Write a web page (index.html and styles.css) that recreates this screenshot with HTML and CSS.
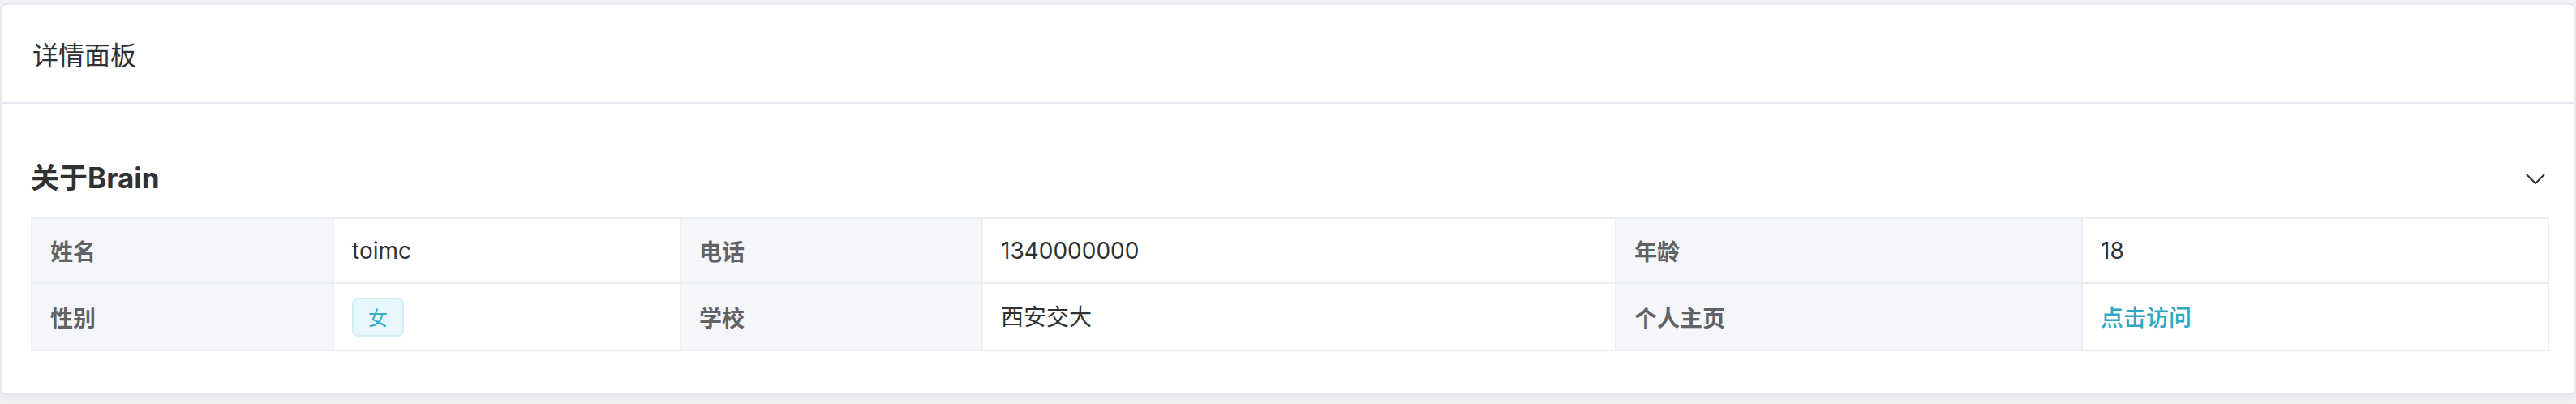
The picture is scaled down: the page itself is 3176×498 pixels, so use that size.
FILE: index.html
```html
<!DOCTYPE html>
<html lang="zh-CN">
<head>
<meta charset="utf-8">
<title>详情面板</title>
<link rel="stylesheet" href="styles.css">
</head>
<body>
<div class="page">
  <div class="card">
    <div class="card-header">详情面板</div>
    <div class="card-body">
      <div class="desc-head">
        <div class="desc-title">关于Brain</div>
        <svg class="chevron" viewBox="0 0 24 13" width="24" height="13"><path d="M1 1 L12 12 L23 1" fill="none" stroke="#303133" stroke-width="2"/></svg>
      </div>
      <table class="desc-table">
        <colgroup>
          <col class="c1"><col class="c2"><col class="c3"><col class="c4"><col class="c5"><col class="c6">
        </colgroup>
        <tr>
          <td class="label">姓名</td>
          <td class="value">toimc</td>
          <td class="label">电话</td>
          <td class="value">1340000000</td>
          <td class="label">年龄</td>
          <td class="value">18</td>
        </tr>
        <tr>
          <td class="label">性别</td>
          <td class="value"><span class="tag">女</span></td>
          <td class="label">学校</td>
          <td class="value">西安交大</td>
          <td class="label">个人主页</td>
          <td class="value"><a class="link">点击访问</a></td>
        </tr>
      </table>
    </div>
  </div>
</div>
</body>
</html>
```
FILE: styles.css
```css
html, body {
  margin: 0;
  padding: 0;
  background: #f3f3f5;
  overflow: hidden;
}
body {
  font-family: "Liberation Sans", "Noto Sans CJK SC", sans-serif;
  color: #303133;
}
.page {
  padding-top: 4px;
  height: 494px;
}
.card {
  background: #fff;
  border: 2px solid #e4e7ed;
  border-radius: 8px;
  box-shadow: 0 4px 16px rgba(0, 0, 0, 0.06);
}
.card-header {
  padding: 35px 38px 35px 38px;
  line-height: 50px;
  font-size: 32px;
  font-family: "Noto Sans CJK SC", sans-serif;
  color: #303133;
  border-bottom: 2px solid #e4e7ed;
}
.card-body {
  padding: 68px 33px 52px 36px;
}
.desc-head {
  display: flex;
  align-items: center;
  justify-content: space-between;
  height: 46px;
  margin-bottom: 26px;
}
.desc-title {
  font-size: 35px;
  font-weight: 700;
  line-height: 46px;
  font-family: "Inter", "Noto Sans CJK SC", sans-serif;
  color: #303133;
}
.chevron {
  margin-right: 3px;
  margin-top: 2px;
}
.desc-table {
  width: 3103px;
  border-collapse: collapse;
  table-layout: fixed;
  font-size: 28px;
}
.c1 { width: 372px; }
.c2 { width: 428px; }
.c3 { width: 372px; }
.c4 { width: 781px; }
.c5 { width: 575px; }
.c6 { width: 575px; }
.desc-table td {
  border: 2px solid #ebeef5;
  padding: 16px 22px;
  line-height: 46px;
  height: 46px;
  text-align: left;
}
.label {
  background: #f4f6f9;
  color: #606266;
  font-weight: 700;
  font-family: "Noto Sans CJK SC", sans-serif;
}
.value {
  color: #303133;
  font-family: "Inter", "Noto Sans CJK SC", sans-serif;
}
.tag {
  display: inline-flex;
  align-items: center;
  height: 44px;
  padding: 0 18px;
  border: 2px solid #d0eef4;
  background: #e8f7fb;
  color: #34adc6;
  border-radius: 8px;
  font-size: 24px;
  line-height: 44px;
  vertical-align: middle;
  font-family: "Noto Sans CJK SC", sans-serif;
}
.link {
  color: #2fa8c3;
  font-weight: 500;
  font-family: "Noto Sans CJK SC", sans-serif;
}
```
